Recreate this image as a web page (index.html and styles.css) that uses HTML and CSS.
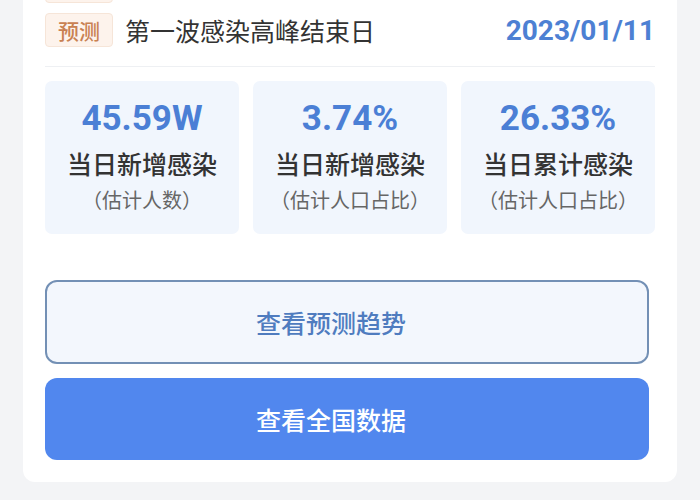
FILE: index.html
```html
<!DOCTYPE html>
<html lang="zh">
<head>
<meta charset="utf-8">
<link rel="stylesheet" href="styles.css">
</head>
<body>
<div class="card">
  <div class="row">
    <span class="tag">实际</span>
    <span class="row-title">第一波感染高峰开始日</span>
    <span class="row-date">2022/12/20</span>
  </div>
  <div class="row">
    <span class="tag">预测</span>
    <span class="row-title">第一波感染高峰结束日</span>
    <span class="row-date">2023/01/11</span>
  </div>
  <div class="divider"></div>
  <div class="stats">
    <div class="stat">
      <div class="stat-num">45.59W</div>
      <div class="stat-label">当日新增感染</div>
      <div class="stat-sub">（估计人数）</div>
    </div>
    <div class="stat">
      <div class="stat-num">3.74%</div>
      <div class="stat-label">当日新增感染</div>
      <div class="stat-sub">（估计人口占比）</div>
    </div>
    <div class="stat">
      <div class="stat-num">26.33%</div>
      <div class="stat-label">当日累计感染</div>
      <div class="stat-sub">（估计人口占比）</div>
    </div>
  </div>
  <div class="btn btn-outline">查看预测趋势</div>
  <div class="btn btn-solid">查看全国数据</div>
</div>
</body>
</html>
```
FILE: styles.css
```css
html, body {
  margin: 0;
  padding: 0;
}
body {
  width: 700px;
  height: 500px;
  overflow: hidden;
  background: #f3f4f6;
  font-family: "Noto Sans", "Noto Sans CJK SC", sans-serif;
}
.card {
  margin: -45px 23px 0 23px;
  padding: 14px 22px 22px 22px;
  background: #ffffff;
  border-radius: 12px;
}
.row {
  display: flex;
  align-items: center;
  height: 34px;
  margin-bottom: 10px;
}
.row:last-of-type {
  margin-bottom: 0;
}
.tag {
  box-sizing: border-box;
  height: 34px;
  width: 68px;
  display: flex;
  align-items: center;
  justify-content: center;
  background: #fdf3ec;
  border: 1px solid #f6e5d8;
  border-radius: 4px;
  color: #c98152;
  font-size: 21px;
  font-weight: 500;
  font-family: "Noto Sans CJK SC", sans-serif;
}
.row-title {
  margin-left: 12px;
  flex: 1;
  font-size: 25px;
  font-weight: 400;
  color: #333333;
  font-family: "Noto Sans CJK SC", sans-serif;
}
.row-date {
  font-family: Roboto, "Noto Sans", sans-serif;
  font-weight: 700;
  font-size: 28px;
  color: #4d80d3;
}
.divider {
  height: 1px;
  background: #eef0f3;
  margin-top: 19px;
}
.stats {
  display: grid;
  grid-template-columns: repeat(3, 1fr);
  gap: 14px;
  margin-top: 14px;
}
.stat {
  height: 153px;
  box-sizing: border-box;
  padding-top: 18px;
  background: #f1f6fd;
  border-radius: 7px;
  display: flex;
  flex-direction: column;
  align-items: center;
}
.stat-num {
  font-family: Roboto, "Noto Sans", sans-serif;
  font-weight: 700;
  font-size: 35px;
  line-height: 40px;
  color: #4b7fd5;
}
.stat-label {
  margin-top: 6px;
  font-family: "Noto Sans CJK SC", sans-serif;
  font-size: 25px;
  font-weight: 500;
  line-height: 36px;
  color: #333333;
}
.stat-sub {
  margin-top: 4px;
  font-family: "Noto Sans CJK SC", sans-serif;
  font-size: 20px;
  line-height: 30px;
  color: #666666;
}
.btn {
  box-sizing: border-box;
  margin-right: 6px;
  display: flex;
  align-items: center;
  justify-content: center;
  padding-right: 32px;
  border-radius: 12px;
  font-family: "Noto Sans CJK SC", sans-serif;
  font-size: 25px;
  font-weight: 500;
}
.btn-outline {
  margin-top: 46px;
  height: 84px;
  background: #f3f7fd;
  border: 2px solid #7390b5;
  color: #4f7cbf;
}
.btn-solid {
  margin-top: 14px;
  height: 82px;
  background: #5187ee;
  color: #ffffff;
}
```
